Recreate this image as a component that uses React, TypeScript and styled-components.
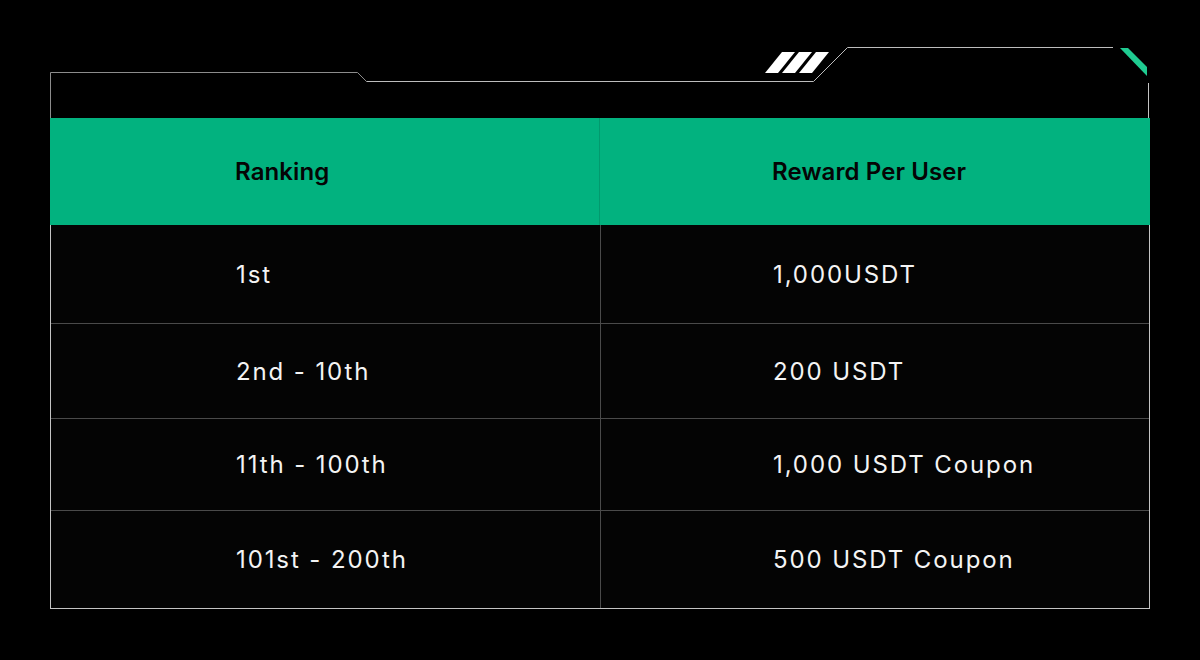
import React from "react";
import styled, { createGlobalStyle } from "styled-components";

const Global = createGlobalStyle`
  html, body { margin: 0; padding: 0; background: #000; }
  body { width: 1200px; height: 660px; overflow: hidden; font-family: Inter, "Noto Sans", sans-serif; }
`;

const Page = styled.div`
  width: 1200px;
  height: 660px;
  background: #000;
  padding: 45px 50px 0 50px;
  box-sizing: border-box;
  display: flex;
  flex-direction: column;
`;

const Deco = styled.svg`
  display: block;
  width: 1100px;
  height: 73px;
`;

const Header = styled.div`
  display: grid;
  grid-template-columns: 550px 550px;
  height: 107px;
  background: #02b27f;
`;

const HeadCell = styled.div<{ $pad: number; $divider?: boolean }>`
  display: flex;
  align-items: center;
  padding-left: ${(p) => p.$pad}px;
  border-right: ${(p) => (p.$divider ? "1px solid #029a6e" : "none")};
  font-family: Inter, "Noto Sans", sans-serif;
  font-weight: 600;
  font-size: 24px;
  letter-spacing: 0.1px;
  color: #050505;
`;

const Body = styled.div`
  background: #040404;
  border-left: 1px solid #c4c4c4;
  border-right: 1px solid #c4c4c4;
  border-bottom: 1px solid #c4c4c4;
  width: 1100px;
  box-sizing: border-box;
`;

const Row = styled.div<{ $h: number; $last?: boolean }>`
  display: grid;
  grid-template-columns: 550px 1fr;
  height: ${(p) => p.$h}px;
  border-bottom: ${(p) => (p.$last ? "none" : "1px solid #4a4a4a")};
  box-sizing: border-box;
`;

const Cell = styled.div<{ $pad: number; $divider?: boolean }>`
  display: flex;
  align-items: center;
  padding-left: ${(p) => p.$pad}px;
  border-right: ${(p) => (p.$divider ? "1px solid #4a4a4a" : "none")};
  font-family: Inter, "Noto Sans", sans-serif;
  font-weight: 400;
  font-size: 24px;
  letter-spacing: 1.9px;
  color: #f4f4f4;
`;

const rows = [
  { rank: "1st", reward: "1,000USDT", h: 99 },
  { rank: "2nd - 10th", reward: "200 USDT", h: 95 },
  { rank: "11th - 100th", reward: "1,000 USDT Coupon", h: 92 },
  { rank: "101st - 200th", reward: "500 USDT Coupon", h: 97 },
];

export default function App() {
  return (
    <>
      <Global />
      <Page>
        <Deco viewBox="0 0 1100 73">
          <path d="M0.5 73 V27.5 H307.5 L316.5 36.5" fill="none" stroke="#8c8c8c" strokeWidth="1" />
          <path d="M316.5 36.5 H763.5 L797.5 2.5 H1063" fill="none" stroke="#bdbdbd" strokeWidth="1" />
          <path d="M1098.5 38 V73" fill="none" stroke="#c4c4c4" strokeWidth="1" />
          <polygon points="1070,3 1078,3 1097,22 1097,31" fill="#1fcb91" />
          {[0, 1, 2].map((i) => (
            <polygon
              key={i}
              points={`${715 + 17 * i},28 ${728 + 17 * i},28 ${745 + 17 * i},7 ${732 + 17 * i},7`}
              fill="#ffffff"
            />
          ))}
        </Deco>
        <Header>
          <HeadCell $pad={185} $divider>Ranking</HeadCell>
          <HeadCell $pad={172}>Reward Per User</HeadCell>
        </Header>
        <Body>
          {rows.map((r, i) => (
            <Row key={i} $h={r.h} $last={i === rows.length - 1}>
              <Cell $pad={185} $divider>{r.rank}</Cell>
              <Cell $pad={172}>{r.reward}</Cell>
            </Row>
          ))}
        </Body>
      </Page>
    </>
  );
}
